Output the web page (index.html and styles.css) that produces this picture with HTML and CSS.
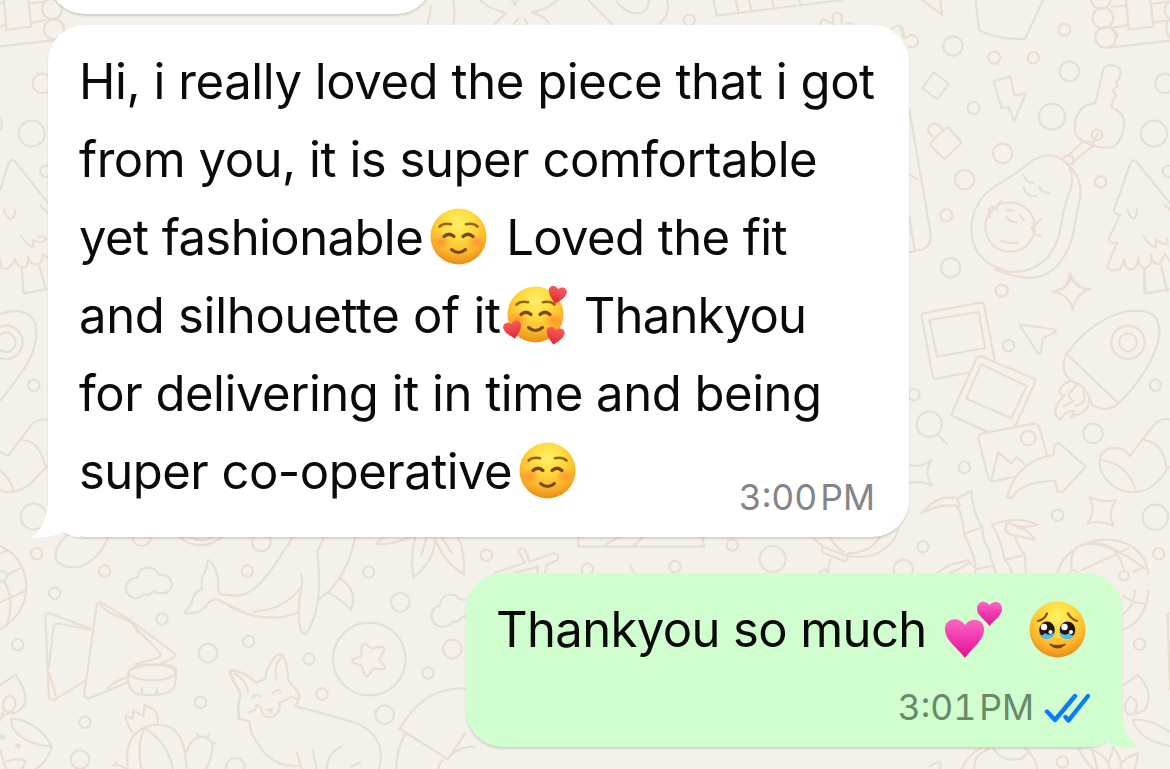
FILE: index.html
```
<!DOCTYPE html>
<html lang="en">
<head>
<meta charset="utf-8">
<title>Chat</title>
<link rel="stylesheet" href="styles.css">
</head>
<body>
<svg class="wallpaper" viewBox="0 0 1170 769" aria-hidden="true">
  <!-- top right -->
  <g transform="translate(900 0) scale(.33333)">
    <path d="M60-5L126 45L120-5M226-5L237 90Q300 122 375 116L432-5"/>
    <path d="M0 82Q8 90 9 110Q20 116 28 106Q48 102 54 120Q56 138 38 142L24 140"/>
    <circle cx="159" cy="138" r="29"/><circle cx="283" cy="173" r="18"/><circle cx="400" cy="173" r="17"/><circle cx="493" cy="89" r="18"/><circle cx="508" cy="214" r="29"/><circle cx="221" cy="324" r="18"/><circle cx="456" cy="350" r="39"/><circle cx="308" cy="460" r="29"/><circle cx="194" cy="539" r="29"/><circle cx="139" cy="646" r="18"/><circle cx="152" cy="803" r="29"/><circle cx="602" cy="546" r="17"/><circle cx="795" cy="250" r="29"/><circle cx="762" cy="401" r="39"/><circle cx="805" cy="514" r="17"/><circle cx="305" cy="872" r="18"/>
    <path d="M104 219L143 249Q147 253 143 257L116 293Q112 298 106 294L71 267Q67 263 71 258L98 222Q101 216 106 220ZM136 385Q142 380 149 386L181 422Q186 428 180 433L138 473Q132 478 126 472L93 438Q88 432 94 427ZM98 408Q82 400 85 387Q88 373 102 371Q120 372 125 388"/>
    <path d="M281 243L331 230L343 286L377 281L343 362L326 321L304 324Z"/>
    <path d="M586 310L610 206Q617 192 645 197Q663 203 661 220L658 236L648 246L654 258L637 270L649 288L639 298L635 323Q676 340 672 370Q670 422 640 440Q615 448 580 437Q525 420 524 390Q525 312 586 310Z"/>
    <circle cx="591" cy="405" r="16"/><path d="M592 400L578 438L518 486M582 425L548 425L506 466M495 466L518 470L522 490L504 493L488 480Z"/>
    <path d="M368 504Q440 438 498 486C535 535 507 575 494 620C480 680 485 715 445 770Q390 825 320 814C240 790 211 740 214 680Q220 610 270 570C302 545 335 533 368 504Z"/>
    <path d="M512 502C550 545 545 585 533 625C520 700 520 730 482 785Q440 840 375 832Q325 828 285 808"/>
    <circle cx="330" cy="681" r="74"/><path d="M305 602L294 612L290 628L276 620L266 628L270 650M423 657L405 674L396 684L402 702L424 708M371 526Q378 548 400 548M418 558Q420 577 446 578M372 563Q376 592 410 588M320 650Q325 668 352 666M320 630L342 632M358 645L372 660M304 722Q325 732 354 728"/>
    <path d="M810 610L710 486Q700 474 691 490L642 628Q638 642 660 644L627 715Q625 732 652 728L622 798Q624 816 660 808L673 778Q672 804 690 808Q712 808 715 772Q714 798 735 804Q755 800 755 765Q752 792 780 792L794 762L810 782M733 806V875M784 800L802 875M682 628Q690 656 702 656Q712 650 710 628M731 709Q748 738 768 742L766 716Q783 734 803 732L802 714M793 614L810 630"/>
    <path d="M28 330L92 700Q95 748 50 752L28 757M28 524L52 537M28 650L44 750M470 870Q505 865 510 819Q530 865 570 870"/>
    <circle cx="603" cy="-2" r="29"/><circle cx="609" cy="54" r="31"/><circle cx="617" cy="112" r="31"/><path d="M635 20L674 17M645 82L684 75M635 142L810 122M654 108L636 83M678-5L686 89L760 80L750-5M754 12L810 5M760 68L810 60M810 5Q780 25 806 55Q790 85 810 115"/>
  </g>
  <!-- middle right -->
  <g transform="translate(900 280) scale(.33333)">
    <circle cx="305" cy="32" r="18"/><circle cx="326" cy="197" r="17"/><circle cx="42" cy="344" r="17"/><circle cx="88" cy="433" r="38"/><path d="M114 465L142 492"/><circle cx="193" cy="562" r="17"/><circle cx="579" cy="460" r="29"/><circle cx="766" cy="316" r="17"/><circle cx="473" cy="706" r="17"/><circle cx="69" cy="800" r="17"/><circle cx="766" cy="712" r="38"/><circle cx="776" cy="821" r="17"/><circle cx="10" cy="868" r="29"/>
    <path d="M510-15Q513 25 458 35Q510 45 517 88Q530 40 570 28Q525 25 510-15ZM734-5L737 40L810 28M792-5L800 28"/>
    <path d="M205 278L108 296Q101 297 98 289L65 108Q64 101 72 99L242 68Q250 67 252 75L284 240M88 120L236 96L255 204L111 230Z"/>
    <path d="M262 455L158 408Q153 404 157 396L230 234Q235 226 243 229L402 296Q408 300 405 307L347 436M243 253L380 318L334 415L199 356Z"/>
    <path d="M358 133L467 149Q469 154 462 158L428 175L423 217Q418 226 412 217Z"/>
    <path d="M345 590L280 604Q268 604 264 592L235 476Q233 463 246 461L401 431Q415 431 418 443L441 525M274 600L295 517L333 551L350 531L378 557"/><circle cx="385" cy="474" r="22"/>
    <path d="M323 651C338 570 405 532 461 525L464 493L477 490L555 557L554 563L488 636L472 634L466 603Q390 602 350 635Q333 662 323 651Z"/>
    <path d="M500 221C570 125 660 85 725 93Q784 98 778 170C765 230 723 307 655 370Q624 400 577 375L568 354M515 303Q475 270 500 221L655 370"/><circle cx="684" cy="187" r="50"/><circle cx="684" cy="187" r="27"/>
    <path d="M568 354Q568 390 541 401L514 409L524 393Q500 390 480 419Q455 405 474 368L494 345Q473 345 480 328Q491 307 515 303Q555 315 568 354M529 315L505 345L519 365L490 379M550 335Q565 370 526 377"/>
    <path d="M810 418Q777 412 755 443L689 528Q674 500 632 505Q591 515 600 560C612 610 660 640 708 636Q760 634 800 570L810 560M602 540Q685 550 708 635M735 480Q790 490 800 564"/>
    <path d="M568 652Q610 670 648 660Q621 700 641 738Q602 720 562 730Q590 692 568 652ZM28 555Q65 565 93 540Q70 580 97 618Q65 600 28 610"/>
    <path d="M64 699Q115 640 171 655L214 633L218 662Q225 710 247 742Q247 780 265 805L287 880M64 699Q115 672 165 677Q185 682 176 668L171 655M170 678Q190 705 192 762L247 742M192 762L218 820Q230 855 224 880M226 868L279 857M110 880Q150 850 170 850L205 840L220 860M145 880Q185 865 205 850"/>
    <path d="M276 735Q350 705 414 735Q370 748 322 728Q305 760 340 765L404 780Q385 745 350 742M276 735Q305 780 314 840L374 825Q355 800 345 768M314 840Q334 860 334 880M374 825L378 880"/>
    <path d="M472 880C505 750 730 740 745 880M515 870Q510 820 530 800Q650 760 672 875M545 870L685 806M560 790Q640 790 732 865M700 875L732 862"/><circle cx="672" cy="887" r="14"/><circle cx="520" cy="885" r="14"/>
  </g>
  <!-- bottom left -->
  <g transform="translate(0 530) scale(.33333)">
    <path d="M0 48C105 90 105 245 0 298M0 70L20 62M20 135L62 114M14 155Q45 210 22 280M0 217L74 184"/><circle cx="5" cy="139" r="16"/>
    <circle cx="110" cy="71" r="17"/><circle cx="164" cy="190" r="17"/><circle cx="314" cy="123" r="17"/><circle cx="486" cy="267" r="17"/><circle cx="53" cy="344" r="17"/><circle cx="624" cy="369" r="28"/><circle cx="602" cy="517" r="17"/><circle cx="255" cy="577" r="17"/><circle cx="240" cy="689" r="28"/><circle cx="425" cy="20" r="28"/><circle cx="706" cy="712" r="28"/>
    <path d="M205 12Q160 50 168 90Q195 122 245 108Q300 85 324 22M540 22Q600 70 665 22M570 22Q605 40 635 22"/>
    <path d="M402 204Q374 195 378 170Q384 143 413 143Q415 114 442 112Q469 112 475 134Q510 132 515 160Q516 192 483 189Q468 190 463 182Q446 200 431 192Q419 207 402 204Z"/>
    <path d="M720 197L665 194Q650 186 655 155Q652 110 624 89Q620 120 605 145L605 178Q579 185 574 222L553 249Q590 256 616 230Q630 207 650 208L720 240"/>
    <path d="M272 296L148 250Q135 248 136 264L147 500Q150 512 165 508L253 454M270 300L185 282Q162 275 160 294L147 408M148 430L168 500"/>
    <path d="M253 491L290 226Q293 213 305 218L390 270L520 367Q530 375 521 383L485 400M253 491Q252 506 269 505L383 457M300 224L323 245L390 275L478 367Q488 376 473 384L405 403M405 290L414 308M383 442Q350 448 323 475"/>
    <ellipse cx="456" cy="427" rx="70" ry="24"/><path d="M384 430C380 510 430 493 475 494C525 490 529 470 528 418Q510 399 460 404Q390 410 384 430M426 476V492M470 476V492"/>
    <path d="M0 466L47 434C85 490 90 530 43 550L28 545M8 546L0 572M10 535Q8 500 30 496Q48 505 46 525Q38 550 24 550ZM33 566C72 566 130 595 155 650Q83 642 50 608Q32 592 33 566M155 650Q145 690 105 720M0 570Q10 548 24 552M18 720L10 690L0 660M18 695Q50 683 75 692Q75 710 60 720"/>
    <circle cx="7" cy="621" r="5"/><circle cx="54" cy="648" r="5"/>
    <path d="M385 720C370 635 405 590 470 583C530 585 556 620 560 720M425 720Q410 650 432 595Q500 630 520 720M395 606L378 570L377 557L398 566L400 542L430 558L434 525Q483 540 472 583M560 665Q575 620 610 620Q640 630 638 650Q635 690 615 720M590 610L597 620M626 612L622 624M636 640H647M345 695L352 706M337 708Q360 700 382 720"/>
    <path d="M720 425L690 419Q685 440 718 480M718 510Q710 530 718 565"/>
  </g>
  <!-- bottom centre -->
  <g transform="translate(230 530) scale(.33333)">
    <circle cx="94" cy="36" r="28"/><circle cx="52" cy="123" r="17"/><circle cx="416" cy="126" r="17"/><circle cx="511" cy="217" r="28"/><circle cx="56" cy="334" r="17"/><circle cx="237" cy="387" r="17"/><circle cx="276" cy="492" r="17"/><circle cx="594" cy="429" r="17"/><circle cx="667" cy="357" r="28"/><circle cx="464" cy="554" r="28"/><circle cx="418" cy="387" r="109"/>
    <path d="M188 22C125 120 75 210 0 197M0 230Q110 285 202 248M70 245Q160 240 214 172Q220 155 213 135M214 172C200 240 205 320 228 312C265 260 275 180 262 65L281 22M376 22Q350 150 268 207M295 188Q335 210 363 240Q385 180 330 145"/>
    <path d="M438 40L460 22M438 42Q490 45 540 22M556 22Q540 80 550 142Q618 90 615 22M590 22L573 78M620 35Q640 95 702 134Q705 70 685 22M635 22L665 68"/>
    <path d="M395 350Q400 335 410 346L425 355L455 350Q466 354 460 365L447 388L466 410Q465 420 453 417L430 415L416 436Q408 444 403 433L396 408L371 399Q362 394 371 387L394 378Z"/>
    <path d="M706 210L687 207Q676 190 655 195Q632 198 630 226Q600 235 605 265Q612 291 640 291Q663 288 668 274Q688 280 693 262L706 258"/>
    <path d="M706 475Q580 470 509 597L653 687L706 610M525 613Q497 660 500 720M640 690Q622 705 625 720M655 685Q680 650 735 650"/>
    <path d="M0 421C48 425 65 448 78 458L105 448C113 400 140 365 157 374C175 400 172 430 176 455Q192 465 210 500L202 515L198 529Q300 555 370 577C440 598 467 660 445 720M0 421Q10 455 32 490L26 520V567L57 573L65 610L83 640C110 690 155 710 207 708M15 432Q48 447 54 485M139 450Q130 400 158 380M67 502Q75 490 91 500M128 490Q140 472 154 486M57 547L75 540L80 525L92 532M92 532Q95 562 120 562Q155 555 148 518L167 510L182 500L205 508M110 540L127 537L120 550M200 667L217 720M248 660L260 720M290 720Q292 665 336 650M83 640L94 654M360 710L390 698"/>
  </g>
  <!-- left edge -->
  <g transform="scale(.33333)">
    <path d="M0 10L12 7M12-5L19 90L94 80L84-5M90 10L133 5M96 68L136 60M0 80L15 74M0 139L160 121"/><circle cx="156" cy="27" r="30"/><circle cx="162" cy="88" r="30"/><circle cx="127" cy="250" r="29"/><circle cx="95" cy="401" r="39"/><circle cx="138" cy="514" r="17"/><circle cx="-28" cy="371" r="34"/>
    <path d="M0 572L25 490Q36 472 48 488L145 610M122 617L145 640M12 628Q18 656 34 656Q47 650 45 630M64 708Q82 738 102 742L98 720Q130 735 137 716Q130 704 115 712M0 775L5 805Q30 815 45 775Q50 805 75 802Q88 790 84 770Q90 795 113 793Q130 785 128 762L145 775M65 805L71 880L138 868L118 798"/>
  </g>
  <g transform="translate(0 290) scale(.33333)">
    <path d="M0 73Q80 45 106 100C120 180 75 240 0 332"/><circle cx="18" cy="157" r="50"/><circle cx="18" cy="157" r="29"/><circle cx="101" cy="286" r="17"/>
    <path d="M0 485L24 498L90 410Q105 385 145 389M63 450Q120 450 135 530M0 540Q35 570 40 605M0 602Q60 620 110 562L145 525"/><circle cx="101" cy="680" r="39"/>
  </g>
  <!-- strip above the first full message -->
  <g transform="translate(400 0) scale(.33333)">
    <path d="M93 20Q90 50 82 72M158-5Q168 30 160 72M238-5Q250 20 318 40L285 72M350-5L345 15L332-5M475-5Q460 20 395 38Q440 50 446 72M355 55L342 72M375 58L382 72M560-5L636 72M645-5Q670 42 720 40Q750 30 745-5M800-5Q815 40 778 72M940-5L950 47L1325 0M1006-5L1015 38M1045-5L1055 32M1115-5L1122 22M1195-5L1202 15M1260 72Q1265 52 1280 62L1300 72L1298 45Q1310 30 1326 45L1325 72M1340 70Q1355 65 1362 75M1475 85Q1495 70 1508 85L1512 105"/><circle cx="868" cy="61" r="17"/>
  </g>
  <!-- between the messages -->
  <g transform="translate(460 510) scale(.33333)">
    <circle cx="79" cy="136" r="17"/><circle cx="382" cy="178" r="17"/><circle cx="645" cy="170" r="17"/><circle cx="817" cy="105" r="17"/><circle cx="938" cy="147" r="39"/>
    <path d="M105 188L195 158L175 125Q180 110 195 118L208 155L280 130Q302 135 292 150L260 165L255 188M165 188L235 170L232 188M355 80V110H732L728 80M440 102L480 80M520 108L550 80M510 163L522 188M1060 85L1090 110L1165 140Q1160 158 1145 150L1090 128Q1080 118 1090 110M1130 125Q1180 150 1240 135Q1300 110 1315 60M1110 80Q1125 110 1150 125M1165 130Q1230 130 1260 80M1112 148L1103 180M1080 188Q1092 170 1105 188"/>
  </g>
  <!-- bottom right -->
  <g transform="translate(930 590) scale(.33333)">
    <circle cx="629" cy="163" r="17"/><circle cx="397" cy="516" r="17"/>
    <path d="M655 0Q650 90 580 120M580 18Q610 40 648 42M580 72Q615 45 615 0M720 70Q710 75 713 85L720 300M582 285L624 254Q675 310 645 360L618 372M592 372Q575 345 600 320Q632 335 615 365Q600 378 592 372M608 390C660 385 690 410 720 425M608 390Q625 450 720 468M95 537Q110 500 150 475M322 537Q315 500 285 475M190 475Q215 520 275 505L300 485M130 537L140 500L175 475M445 475Q465 515 490 537M485 480Q500 510 500 537M485 480Q520 490 535 520Q545 490 550 470Q565 490 575 518Q600 495 625 490L615 537M0 530Q20 512 33 520L30 537M535 520L540 537M575 518L570 537"/>
  </g>
</svg>

<svg class="defs" width="0" height="0" aria-hidden="true">
  <defs>
    <radialGradient id="skin" cx=".5" cy=".27" r=".74"><stop offset="0" stop-color="#fff06a"/><stop offset=".35" stop-color="#ffdd40"/><stop offset=".7" stop-color="#fdb92c"/><stop offset="1" stop-color="#e88a18"/></radialGradient>
    <radialGradient id="blush"><stop offset="0" stop-color="#ff7a2f" stop-opacity=".65"/><stop offset="1" stop-color="#ff8a35" stop-opacity="0"/></radialGradient>
    <linearGradient id="red" x2="0" y2="1"><stop offset="0" stop-color="#fa5c58"/><stop offset="1" stop-color="#dc2634"/></linearGradient>
    <linearGradient id="pink" x2="0" y2="1"><stop offset="0" stop-color="#fb68c3"/><stop offset=".5" stop-color="#f137ae"/><stop offset="1" stop-color="#dd1590"/></linearGradient>
    <path id="heart" d="M0 9C-4 5-9 1-9-4C-9-9-3-10 0-6C3-10 9-9 9-4C9 1 4 5 0 9Z"/>
    <g id="smile">
      <circle cx="28.5" cy="28.500" r="28" fill="url(#skin)"/>
      <ellipse cx="11" cy="34" rx="10" ry="8" fill="url(#blush)"/><ellipse cx="46" cy="34" rx="10" ry="8" fill="url(#blush)"/>
      <path d="M9.500 18.500Q13.500 14.800 21 16.200M36 16.200Q43.500 14.800 47.500 18.500" fill="none" stroke="#94631a" stroke-width="2.600" stroke-linecap="round"/>
      <path d="M14 28.500Q19 24 24 28.500M33 28.500Q38 24 43 28.500" fill="none" stroke="#774a12" stroke-width="3.200" stroke-linecap="round"/>
      <path d="M21.500 41.500Q28.500 47.500 35.500 41.500" fill="none" stroke="#774a12" stroke-width="3" stroke-linecap="round"/>
    </g>
  </defs>
</svg>

<main class="chat">
  <div class="bubble incoming earlier"></div>

  <article class="bubble incoming message">
    <p class="line l1"><span>Hi, i really loved the piece that i got</span></p>
    <p class="line l2"><span>from you, it is super comfortable</span></p>
    <p class="line l3"><span class="lead">yet fashionable</span><svg class="emoji" viewBox="0 0 57 57"><use href="#smile"/></svg><span>Loved the fit</span></p>
    <p class="line l4"><span class="lead">and silhouette of it</span><svg class="emoji" viewBox="0 0 57 57"><use href="#smile"/><g fill="url(#red)"><use href="#heart" transform="translate(50 9) rotate(12)"/><use href="#heart" transform="translate(6 44) rotate(-14)"/><use href="#heart" transform="translate(48 50) rotate(10)"/></g></svg><span class="after">Thankyou</span></p>
    <p class="line l5"><span>for delivering it in time and being</span></p>
    <p class="line l6"><span class="lead">super co-operative</span><svg class="emoji" viewBox="0 0 57 57"><use href="#smile"/></svg></p>
    <footer class="meta"><time>3:00 PM</time></footer>
    <svg class="tail" viewBox="0 0 50 60"><path d="M18 0V22Q15 46 1 56Q20 56 34 50Q43 56 50 55V0Z"/></svg>
  </article>

  <article class="bubble outgoing">
    <p class="line o1"><span class="lead">Thankyou so much</span><svg class="emoji" viewBox="0 0 57 57"><g fill="url(#pink)"><path d="M20 57C13 47 0 40 0 28C0 17 14 15 20 24C26 15 39 18 39 28C39 40 27 47 20 57Z"/><path d="M44.500 25C40 18 32 15 32 8C32-1 41-1 44.500 4C49-1 57 0 57 8C57 15 49 19 44.500 25Z"/></g></svg><svg class="emoji" viewBox="0 0 57 57">
      <circle cx="28.500" cy="28.500" r="28" fill="url(#skin)"/>
      <path d="M9 20Q16 18 18 12.500M39 12.500Q42 18 48 20" fill="none" stroke="#87551a" stroke-width="2.300" stroke-linecap="round"/>
      <ellipse cx="18" cy="29" rx="7.800" ry="8.500" fill="#24140d"/><ellipse cx="38.500" cy="29" rx="7.800" ry="8.500" fill="#24140d"/>
      <path d="M10 33Q13 36 16 32Q21 36 26 31Q25 38 18 38Q12 38 10 33ZM30.500 31Q36 36 40 32Q43 36 47 33Q44 38 38 38Q31 38 30.500 31Z" fill="#4fbdea"/>
      <g fill="#fff"><circle cx="15" cy="26" r="3.200"/><circle cx="35.500" cy="26" r="3.200"/><circle cx="21.500" cy="31" r="2"/><circle cx="42" cy="31" r="2"/></g>
      <path d="M21 43.500Q28.500 50 36 43.500Q28.500 46 21 43.500Z" fill="#7a4312" stroke="#7a4312" stroke-width="1.500" stroke-linejoin="round"/>
    </svg></p>
    <footer class="meta"><time>3:01 PM</time><svg class="ticks" viewBox="0 0 46 31"><path d="M3 18.500L11 27L31 3M21.500 24L24.500 27.500L44 3"/></svg></footer>
    <svg class="tail" viewBox="0 0 50 60"><path d="M32 0V20Q34 46 49 56Q30 57 16 50Q8 55 0 55V0Z"/></svg>
  </article>
</main>
</body>
</html>
```
FILE: styles.css
```
* { box-sizing: border-box; }
body {
  margin: 0;
  width: 1170px;
  height: 769px;
  overflow: hidden;
  position: relative;
  background: #f4f1ea;
  font-family: Inter, "Noto Sans", sans-serif;
}
.wallpaper {
  position: absolute;
  inset: 0;
  width: 1170px;
  height: 769px;
  fill: none;
  stroke: #eaddd1;
  stroke-width: 6.5;
  stroke-linecap: round;
  stroke-linejoin: round;
}
.defs { position: absolute; }
.chat {
  position: relative;
  display: flex;
  flex-direction: column;
  height: 769px;
  padding: 0 48px;
}
.bubble {
  position: relative;
  flex: none;
  border-radius: 37px;
  box-shadow: 0 2px 2px rgba(90, 80, 65, .2);
}
.incoming { align-self: flex-start; background: #fff; }
.earlier {
  width: 385px;
  height: 80px;
  margin-top: -66px;
  margin-bottom: 11px;
}
.message {
  width: 861px;
  height: 512px;
  padding: 18px 34px 0 31px;
  margin-bottom: 36px;
}
.outgoing {
  align-self: flex-end;
  width: 656px;
  height: 174px;
  padding: 18px 32px 0 30px;
  background: #d0fecf;
}
.line {
  display: flex;
  align-items: center;
  height: 78px;
  margin: 0;
  font-size: 49px;
  line-height: 78px;
  white-space: pre;
  color: #0a0a0a;
}
.l1 { letter-spacing: -.42px; }
.l2, .l5 { letter-spacing: -.46px; }
.l3 { letter-spacing: -.58px; }
.l4 { letter-spacing: -.3px; }
.l4 .after { letter-spacing: -.8px; }
.l6 { letter-spacing: -.52px; }
.o1 { letter-spacing: -.62px; }
.emoji {
  flex: none;
  width: 57px;
  height: 57px;
  margin: 0 19.5px 4px 6.5px;
  overflow: visible;
}
.o1 .emoji { margin: 0 0 2px 18px; }
.o1 .emoji + .emoji { margin-left: 27px; }
.meta {
  display: flex;
  justify-content: flex-end;
  align-items: center;
  height: 44px;
  font-size: 35.5px;
  line-height: 44px;
  font-variant-numeric: tabular-nums;
  word-spacing: -6.5px;
  color: #858585;
}
.message .meta { margin-top: -35px; }
.outgoing .meta { color: #6a886a; margin-top: 17px; }
.ticks {
  width: 46px;
  height: 31px;
  margin-left: 10px;
  fill: none;
  stroke: #087cff;
  stroke-width: 4.4;
  stroke-linecap: round;
  stroke-linejoin: round;
}
.tail {
  position: absolute;
  width: 50px;
  height: 60px;
  bottom: -5px;
}
.message .tail { left: -18px; fill: #fff; }
.outgoing .tail { right: -18px; fill: #d0fecf; }
```
